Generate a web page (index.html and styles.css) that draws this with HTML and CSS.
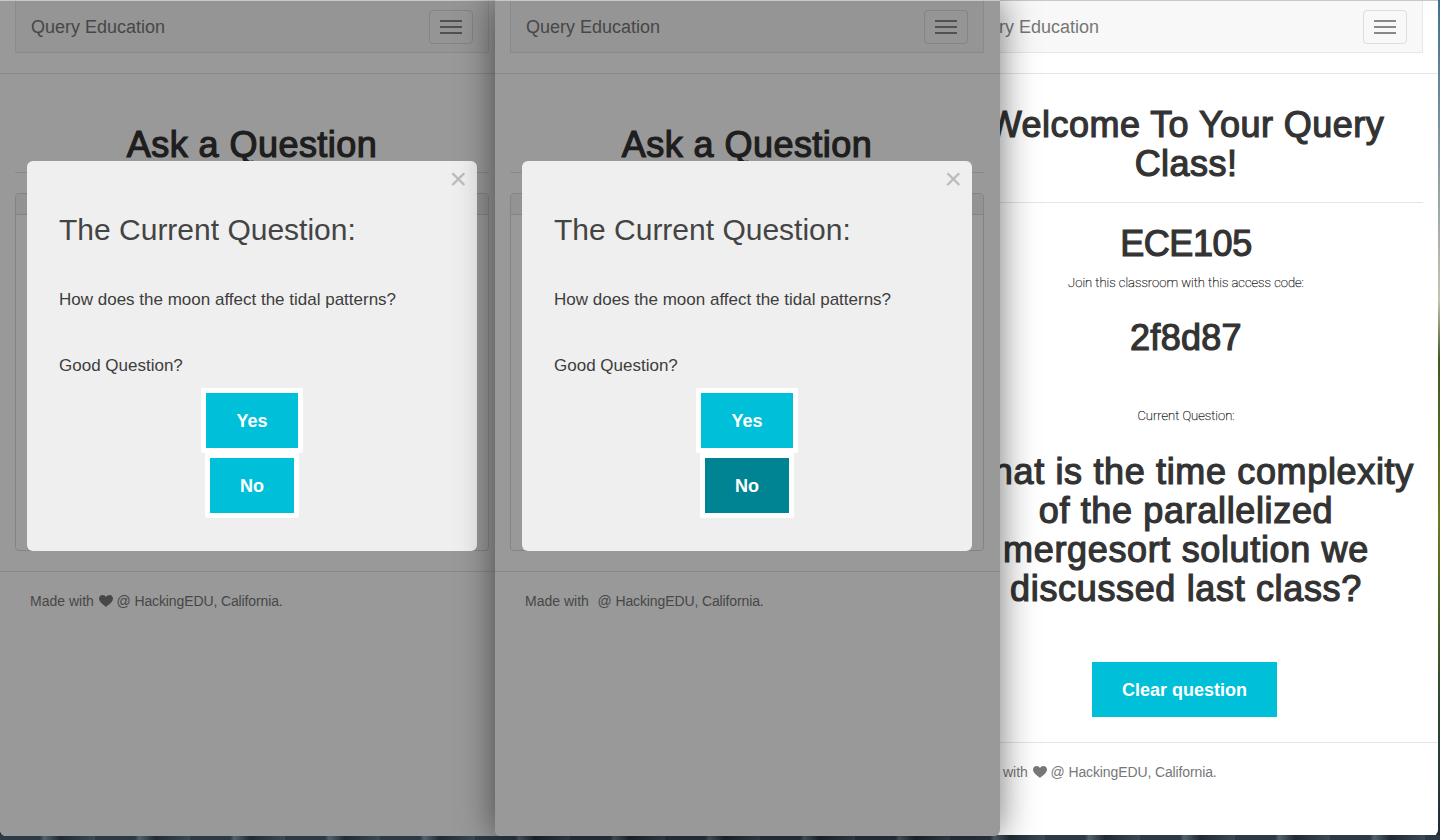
FILE: index.html
```html
<!DOCTYPE html>
<html lang="en">
<head>
<meta charset="utf-8">
<title>Query Education</title>
<link rel="stylesheet" href="styles.css">
</head>
<body>
<main class="desktop">
  <section class="window win-right">
    <div class="gutter"><nav class="navbar"><span class="brand">Query Education</span><span class="toggle"><i></i><i></i><i></i></span></nav></div>
    <hr class="rule first">
    <div class="gutter center">
      <h1 class="welcome">Welcome To Your Query Class!</h1>
      <hr class="rule welcome-rule">
      <h2 class="course">ECE105</h2>
      <p class="thin join">Join this classroom with this access code:</p>
      <h2 class="code">2f8d87</h2>
      <p class="thin current">Current Question:</p>
      <h2 class="question">What is the time complexity of the parallelized mergesort solution we discussed last class?</h2>
      <button class="btn clear">Clear question</button>
    </div>
    <hr class="rule clear-rule">
    <p class="footer">Made with <svg class="heart" viewBox="0 0 14 12"><path d="M7 12C4.6 9.9 0 7.100 0 3.600 0 1.500 1.500 0 3.500 0 5 0 6.300.8 7 2.100 7.700.8 9 0 10.500 0 12.500 0 14 1.500 14 3.600 14 7.100 9.400 9.900 7 12Z"/></svg> <span class="place">@ HackingEDU, California.</span></p>
  </section>

  <section class="window win-left">
    <div class="gutter"><nav class="navbar"><span class="brand">Query Education</span><span class="toggle"><i></i><i></i><i></i></span></nav></div>
    <hr class="rule first">
    <div class="gutter">
      <div class="page-header"><h1 class="ask">Ask a Question</h1></div>
      <div class="panel"><div class="panel-head"></div></div>
    </div>
    <hr class="rule panel-rule">
    <p class="footer">Made with <svg class="heart" viewBox="0 0 14 12"><path d="M7 12C4.6 9.9 0 7.100 0 3.600 0 1.500 1.500 0 3.500 0 5 0 6.300.8 7 2.100 7.700.8 9 0 10.500 0 12.500 0 14 1.500 14 3.600 14 7.100 9.400 9.900 7 12Z"/></svg> <span class="place">@ HackingEDU, California.</span></p>
    <div class="backdrop"></div>
    <div class="modal">
      <span class="close">×</span>
      <h3 class="modal-title">The Current Question:</h3>
      <p class="modal-q">How does the moon affect the tidal patterns?</p>
      <p class="modal-good">Good Question?</p>
      <div class="votes">
        <button class="btn vote yes">Yes</button>
        <button class="btn vote no">No</button>
      </div>
    </div>
  </section>

  <section class="window win-mid">
    <div class="gutter"><nav class="navbar"><span class="brand">Query Education</span><span class="toggle"><i></i><i></i><i></i></span></nav></div>
    <hr class="rule first">
    <div class="gutter">
      <div class="page-header"><h1 class="ask">Ask a Question</h1></div>
      <div class="panel"><div class="panel-head"></div></div>
    </div>
    <hr class="rule panel-rule">
    <p class="footer">Made with &nbsp;<span class="place">@ HackingEDU, California.</span></p>
    <div class="backdrop"></div>
    <div class="modal">
      <span class="close">×</span>
      <h3 class="modal-title">The Current Question:</h3>
      <p class="modal-q">How does the moon affect the tidal patterns?</p>
      <p class="modal-good">Good Question?</p>
      <div class="votes">
        <button class="btn vote yes">Yes</button>
        <button class="btn vote no hover">No</button>
      </div>
    </div>
  </section>
</main>
</body>
</html>
```
FILE: styles.css
```css
* { box-sizing: border-box; }
html, body { margin: 0; height: 100%; }
body { overflow: hidden; font-family: "Liberation Sans", Arial, sans-serif; color: #333; }

.desktop {
  position: relative;
  width: 1440px;
  height: 840px;
  overflow: hidden;
  background: linear-gradient(180deg, #3f6f8f 0, #c7c3b0 300px, #3d5a1e 360px, #6a7a20 520px, #2e4a30 700px, #1d2b38 836px);
}
.desktop::after {
  content: "";
  position: absolute;
  left: 0;
  right: 0;
  bottom: 0;
  height: 5px;
  background: repeating-linear-gradient(90deg, #2c3a47 0, #2c3a47 40px, #51636f 44px, #1f2a34 60px, #3a4a58 95px);
}

.window {
  position: absolute;
  top: 0;
  width: 504px;
  height: 836px;
  overflow: hidden;
  background: #fff;
  border-top: 1px solid #c8c8c8;
  border-radius: 0 0 6px 6px;
}
.win-left { left: 0; z-index: 1; }
.win-mid { left: 495px; width: 505px; z-index: 3; box-shadow: 0 0 36px rgba(0, 0, 0, .55); }
.win-right { left: 934px; z-index: 0; }
.desktop .win-mid { overflow: visible; }
.win-mid .gutter { padding-right: 16px; }
.win-mid .place { margin-left: 1px; }

.gutter { padding: 0 15px; }
.center { text-align: center; }

.navbar {
  display: flex;
  justify-content: space-between;
  align-items: center;
  height: 52px;
  padding: 0 15px;
  background: #f8f8f8;
  border: 1px solid #e7e7e7;
  border-top: 0;
}
.brand { margin-top: 2px; font-size: 18px; color: #777; }
.toggle {
  display: flex;
  flex-direction: column;
  justify-content: center;
  gap: 4px;
  width: 44px;
  height: 34px;
  padding: 0 10px;
  border: 1px solid #ddd;
  border-radius: 4px;
}
.toggle i { display: block; height: 2px; background: #888; }

.rule { margin: 0; border: 0; border-top: 1px solid #e5e5e5; }
.first { margin-top: 20px; }

h1, h2 {
  margin: 0;
  font-size: 36px;
  line-height: 39px;
  font-weight: 400;
  color: #333;
  -webkit-text-stroke: 1.2px #333;
  letter-spacing: .45px;
}
.page-header { padding: 51px 0 8px; border-bottom: 1px solid #e5e5e5; text-align: center; }
.panel { height: 358px; margin-top: 20px; border: 1px solid #ddd; border-radius: 4px; overflow: hidden; }
.panel-head { height: 21px; background: #f5f5f5; border-bottom: 1px solid #ddd; }
.panel-rule { margin-top: 20px; }

.welcome { margin-top: 31px; }
.welcome-rule { margin: 19px 0 0; }
.course { margin-top: 21px; letter-spacing: -.4px; }
.thin {
  margin: 0;
  font-family: Roboto, sans-serif;
  font-weight: 100;
  font-size: 13px;
  line-height: 18px;
  color: #222;
  -webkit-text-stroke: .25px #222;
}
.join { margin-top: 11px; }
.code { margin-top: 26px; letter-spacing: .3px; }
.current { margin-top: 50px; }
.question { margin-top: 27px; padding: 0 6px; letter-spacing: .65px; }
.btn {
  border: 0;
  font-family: inherit;
  font-weight: 700;
  font-size: 18px;
  color: #fff;
  background: #00bfd8;
}
.clear { width: 185px; height: 55px; margin: 54px 3px 0 0; padding: 1px 0 0; }
.clear-rule { margin-top: 25px; }

.footer { margin: 20px 0 0; padding-left: 30px; font-size: 14px; line-height: 18px; color: #777; }
.heart { width: 14px; height: 12px; margin-left: 1px; fill: #777; vertical-align: -1px; }
.place { letter-spacing: -.12px; }

.backdrop { position: absolute; inset: 0; background: rgba(0, 0, 0, .4); border-radius: 0 0 6px 6px; }
.modal {
  position: absolute;
  top: 160px;
  left: 27px;
  width: 450px;
  height: 390px;
  padding: 52px 32px 0;
  background: #efefef;
  border-radius: 6px;
}
.close { position: absolute; top: 4px; right: 10px; font-size: 30px; line-height: 28px; color: #bbb; }
.modal-title { margin: 0; font-size: 30px; line-height: 33px; font-weight: 400; color: #444; }
.modal-q { margin: 43px 0 0; font-size: 17px; line-height: 22px; color: #3d3d3d; }
.modal-good { margin: 44px 0 0; font-size: 17px; line-height: 22px; color: #3d3d3d; }
.votes { display: flex; flex-direction: column; align-items: center; margin-top: 11px; }
.vote { height: 65px; padding: 1px 0 0; border: 5px solid #fff; border-radius: 2px; }
.yes { width: 102px; }
.no { width: 94px; }
.hover { background: #008494; }
```
